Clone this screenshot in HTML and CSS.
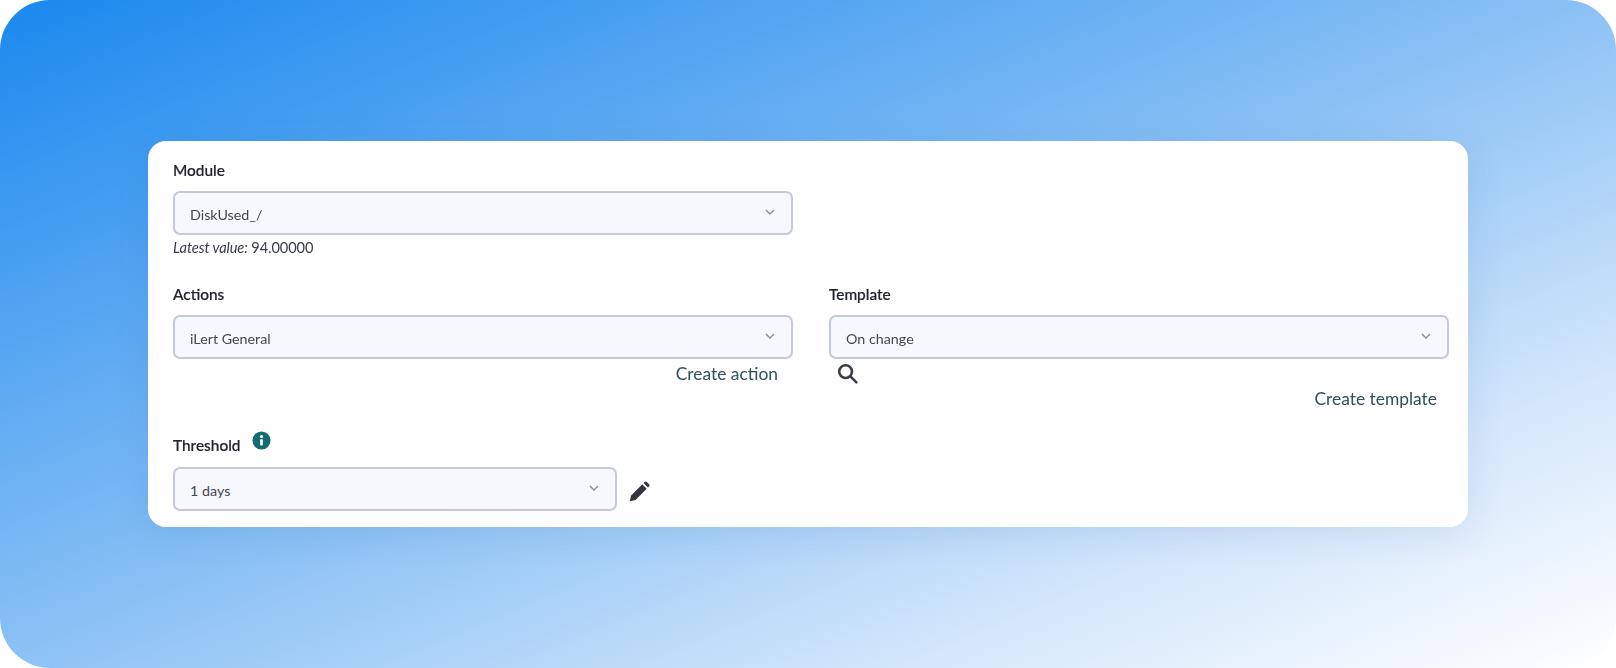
FILE: index.html
```html
<!DOCTYPE html>
<html lang="en">
<head>
    <meta charset="UTF-8">
    <meta name="viewport" content="width=device-width, initial-scale=1.0">
    <title>Alert settings</title>
    <link rel="stylesheet" href="styles.css">
</head>
<body>

<div class="frame">
    <div class="card">
        <div class="card-inner">
            <div class="field module-field">
                <div class="field-label">Module</div>
                <div class="select">
                    <span>DiskUsed_/</span>
                    <svg class="chevron" viewBox="0 0 10 6"><path d="M1 1l4 4 4-4"/></svg>
                </div>
                <div class="latest"><em>Latest value:</em> 94.00000</div>
            </div>

            <div class="columns">
                <div class="field">
                    <div class="field-label">Actions</div>
                    <div class="select">
                        <span>iLert General</span>
                        <svg class="chevron" viewBox="0 0 10 6"><path d="M1 1l4 4 4-4"/></svg>
                    </div>
                    <div class="link-row action-link"><a href="#">Create action</a></div>
                </div>

                <div class="field">
                    <div class="field-label">Template</div>
                    <div class="select">
                        <span>On change</span>
                        <svg class="chevron" viewBox="0 0 10 6"><path d="M1 1l4 4 4-4"/></svg>
                    </div>
                    <svg class="search-icon" viewBox="0 0 22 22">
                        <circle cx="8.6" cy="8.6" r="6.4"/>
                        <path d="M13.4 13.4l6 6"/>
                    </svg>
                    <div class="link-row template-link"><a href="#">Create template</a></div>
                </div>
            </div>

            <div class="threshold-label">
                <span class="field-label">Threshold</span>
                <svg class="info-icon" viewBox="0 0 20 20">
                    <circle cx="10" cy="10" r="9.5" fill="#146c72"/>
                    <rect x="8.6" y="8.6" width="2.8" height="6.6" rx="0.6" fill="#fff"/>
                    <circle cx="10" cy="5.9" r="1.6" fill="#fff"/>
                </svg>
            </div>
            <div class="threshold-row">
                <div class="select threshold-select">
                    <span>1 days</span>
                    <svg class="chevron" viewBox="0 0 10 6"><path d="M1 1l4 4 4-4"/></svg>
                </div>
                <svg class="pencil-icon" viewBox="0 0 24 24">
                    <path d="M2 22l1.4-6.2L15.6 3.6l4.8 4.8L8.2 20.6z"/>
                    <path d="M17 2.2l1.2-1.2a1.6 1.6 0 0 1 2.2 0l2.6 2.6a1.6 1.6 0 0 1 0 2.2L21.8 7z"/>
                </svg>
            </div>
        </div>
    </div>
</div>

</body>
</html>
```

FILE: styles.css
```css
* {
    box-sizing: border-box;
}

body {
    margin: 0;
    background-color: #ffffff;
    font-family: 'Lato', sans-serif;
    color: #3a3d4a;
}

.frame {
    height: 668px;
    padding: 141px 148px;
    border-radius: 50px;
    background: linear-gradient(to bottom right, #1a88ee 0%, #8cc2f5 50%, #d4e7fb 78%, #ffffff 100%);
}

.card {
    height: 386px;
    padding: 20px 20px 0 25px;
    background-color: #fefeff;
    border-radius: 18px;
    box-shadow: 0 6px 36px rgba(40, 90, 160, 0.12);
}

/* the reference is a soft video frame, so text and icons get a slight blur */
.card-inner {
    filter: blur(0.5px);
}

.field-label {
    font-size: 15.4px;
    line-height: 18px;
    font-weight: 500;
    color: #22242c;
    -webkit-text-stroke: 0.2px #22242c;
}

.module-field {
    width: 620px;
}

.select {
    display: flex;
    align-items: center;
    justify-content: space-between;
    height: 44px;
    margin-top: 12px;
    padding: 2px 16px 0 15px;
    background-color: #f7f7fe;
    border: 2px solid #c6c9da;
    border-radius: 7px;
    font-size: 14.3px;
    color: #44474f;
}

.chevron {
    width: 10px;
    height: 6px;
    margin-bottom: 5px;
    fill: none;
    stroke: #8a8e99;
    stroke-width: 1.4;
}

.latest {
    margin-top: 4px;
    font-size: 14.6px;
    line-height: 18px;
    letter-spacing: -0.1px;
    color: #3a3d4a;
}

.columns {
    display: grid;
    grid-template-columns: 620px 620px;
    column-gap: 36px;
    margin-top: 28px;
}

.link-row {
    text-align: right;
}

.link-row a {
    font-size: 17.4px;
    line-height: 20px;
    color: #2f5257;
    text-decoration: none;
}

.action-link {
    margin-top: 5px;
    padding-right: 15px;
}

.template-link {
    margin-top: 4px;
    padding-right: 12px;
}

.search-icon {
    display: block;
    width: 22px;
    height: 22px;
    margin: 4px 0 0 8px;
    fill: none;
    stroke: #3a3d44;
    stroke-width: 2.6;
    stroke-linecap: round;
}

.threshold-label {
    display: flex;
    align-items: flex-end;
    gap: 11px;
    margin-top: 22px;
}

.info-icon {
    width: 19px;
    height: 19px;
    margin-bottom: 4px;
}

.threshold-row {
    display: flex;
    align-items: flex-start;
    gap: 11px;
}

.threshold-select {
    width: 444px;
    margin-top: 13px;
}

.pencil-icon {
    width: 22px;
    height: 22px;
    margin-top: 27px;
    fill: #33363f;
}
```
